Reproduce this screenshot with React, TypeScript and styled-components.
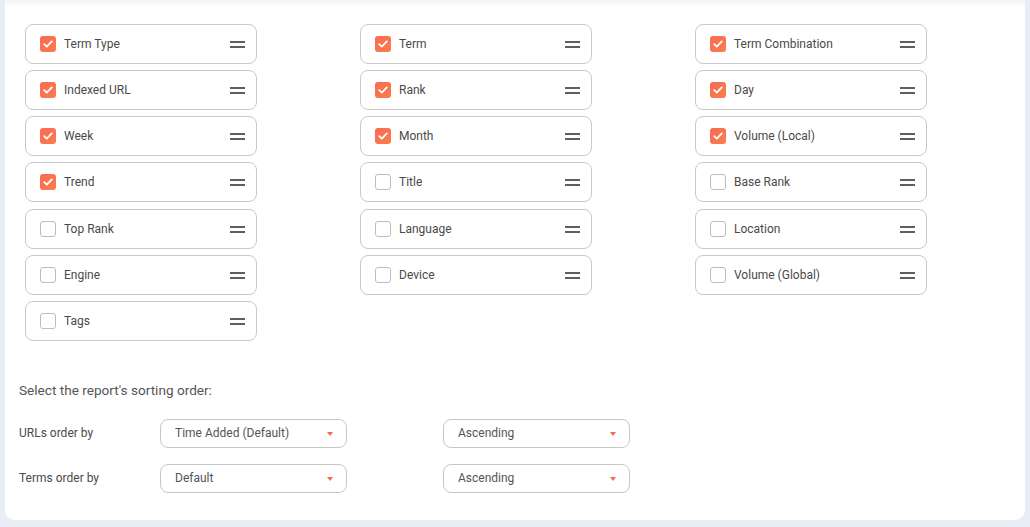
import React from "react";
import styled, { createGlobalStyle } from "styled-components";

const GlobalStyle = createGlobalStyle`
  html, body {
    margin: 0;
    padding: 0;
    background: #e9eef6;
    font-family: Roboto, "Noto Sans", Arial, sans-serif;
  }
`;

const Page = styled.div`
  width: 1030px;
  height: 527px;
  box-sizing: border-box;
  padding: 0 5px 0 5px;
  overflow: hidden;
`;

const Card = styled.div`
  position: relative;
  background: #ffffff;
  border-radius: 0 0 10px 10px;
  height: 520px;
  box-sizing: border-box;
  padding: 24px 20px 0 20px;
  &::before {
    content: "";
    position: absolute;
    left: 0;
    right: 0;
    top: 0;
    height: 6px;
    background: linear-gradient(#f2f3f5, #ffffff);
  }
`;

const ColumnsGrid = styled.div`
  display: grid;
  grid-template-columns: repeat(3, 232px);
  column-gap: 103px;
  row-gap: 6.17px;
`;

const Item = styled.div`
  height: 40px;
  box-sizing: border-box;
  border: 1px solid #c9c9c9;
  border-radius: 8px;
  display: flex;
  align-items: center;
  padding: 0 10px 0 14px;
  background: #fff;
`;

const Box = styled.span<{ $checked: boolean }>`
  width: 16px;
  height: 16px;
  box-sizing: border-box;
  border-radius: 3px;
  flex-shrink: 0;
  display: flex;
  align-items: center;
  justify-content: center;
  border: ${(p) => (p.$checked ? "none" : "1px solid #bdbdbd")};
  background: ${(p) =>
    p.$checked ? "linear-gradient(135deg, #f86a54, #fb7d4d)" : "#fff"};
`;

const Label = styled.span`
  margin-left: 8px;
  font-size: 12px;
  color: #4a4a4a;
  flex: 1;
`;

const Handle = styled.span`
  width: 15px;
  height: 7px;
  border-top: 2px solid #5e5e5e;
  border-bottom: 2px solid #5e5e5e;
  box-sizing: border-box;
  margin-right: 1px;
  margin-top: 1px;
`;

const Sorting = styled.div`
  margin: 41px 0 0 -6px;
`;

const Heading = styled.div`
  font-size: 13.6px;
  color: #555;
  margin-bottom: 21px;
`;

const SortRow = styled.div`
  display: flex;
  align-items: center;
  margin-bottom: 16px;
`;

const RowLabel = styled.span`
  width: 141px;
  font-size: 12px;
  color: #4a4a4a;
`;

const Select = styled.div<{ $gap?: number }>`
  width: 187px;
  height: 29px;
  margin-left: ${(p) => p.$gap ?? 0}px;
  box-sizing: border-box;
  border: 1px solid #c7c7c7;
  border-radius: 8px;
  display: flex;
  align-items: center;
  justify-content: space-between;
  padding: 0 13px 0 14px;
  font-size: 12px;
  color: #555;
`;

const Caret = styled.span`
  width: 0;
  height: 0;
  border-left: 3.5px solid transparent;
  border-right: 3.5px solid transparent;
  border-top: 4px solid #f26b4f;
  margin-top: 2px;
`;

const Check = () => (
  <svg width="10" height="8" viewBox="0 0 10 8">
    <path
      d="M1.2 4.2 L3.8 6.6 L8.8 1.4"
      fill="none"
      stroke="#fff"
      strokeWidth="1.8"
      strokeLinecap="round"
      strokeLinejoin="round"
    />
  </svg>
);

const items: [string, boolean][] = [
  ["Term Type", true],
  ["Term", true],
  ["Term Combination", true],
  ["Indexed URL", true],
  ["Rank", true],
  ["Day", true],
  ["Week", true],
  ["Month", true],
  ["Volume (Local)", true],
  ["Trend", true],
  ["Title", false],
  ["Base Rank", false],
  ["Top Rank", false],
  ["Language", false],
  ["Location", false],
  ["Engine", false],
  ["Device", false],
  ["Volume (Global)", false],
  ["Tags", false],
];

const sortRows = [
  { label: "URLs order by", field: "Time Added (Default)", dir: "Ascending" },
  { label: "Terms order by", field: "Default", dir: "Ascending" },
];

export default function App() {
  return (
    <Page>
      <GlobalStyle />
      <Card>
        <ColumnsGrid>
          {items.map(([name, checked]) => (
            <Item key={name}>
              <Box $checked={checked}>{checked && <Check />}</Box>
              <Label>{name}</Label>
              <Handle />
            </Item>
          ))}
        </ColumnsGrid>
        <Sorting>
          <Heading>Select the report's sorting order:</Heading>
          {sortRows.map((r) => (
            <SortRow key={r.label}>
              <RowLabel>{r.label}</RowLabel>
              <Select>
                {r.field}
                <Caret />
              </Select>
              <Select $gap={96}>
                {r.dir}
                <Caret />
              </Select>
            </SortRow>
          ))}
        </Sorting>
      </Card>
    </Page>
  );
}
